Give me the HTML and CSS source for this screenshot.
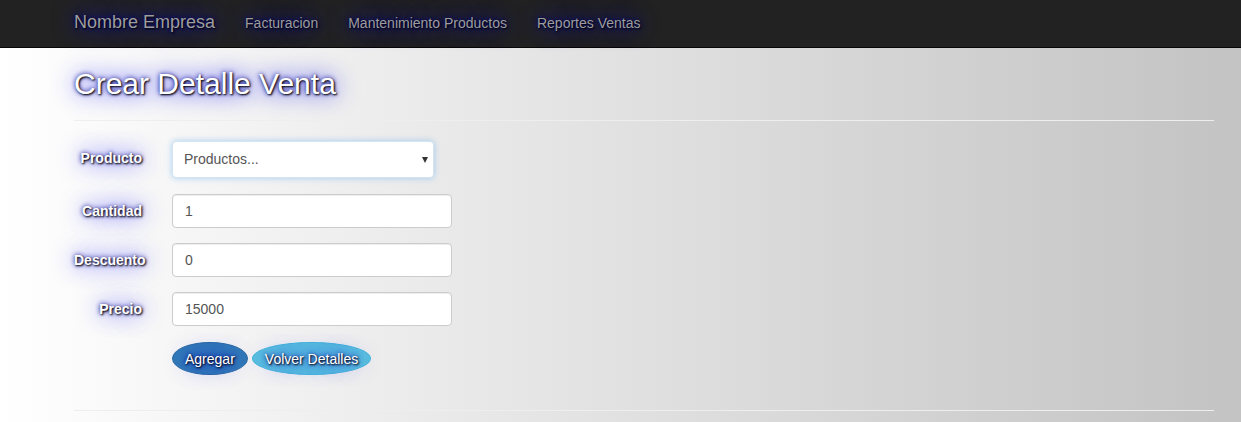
FILE: index.html
```html
<!DOCTYPE html>
<html lang="es">
<head>
<meta charset="utf-8">
<title>Crear Detalle Venta</title>
<link rel="stylesheet" href="styles.css">
</head>
<body>
<nav class="navbar">
  <div class="container nav-inner">
    <a class="brand glow" href="#">Nombre Empresa</a>
    <ul class="nav">
      <li><a class="glow" href="#">Facturacion</a></li>
      <li><a class="glow" href="#">Mantenimiento Productos</a></li>
      <li><a class="glow" href="#">Reportes Ventas</a></li>
    </ul>
  </div>
</nav>
<main class="container">
  <h2 class="title glow">Crear Detalle Venta</h2>
  <hr class="rule">
  <form class="form">
    <div class="form-group form-group-select">
      <label class="control-label glow">Producto</label>
      <div class="select-wrap">
        <select class="form-select"><option>Productos...</option></select>
      </div>
    </div>
    <div class="form-group">
      <label class="control-label glow">Cantidad</label>
      <input class="form-input" type="text" value="1">
    </div>
    <div class="form-group">
      <label class="control-label glow">Descuento</label>
      <input class="form-input" type="text" value="0">
    </div>
    <div class="form-group">
      <label class="control-label glow">Precio</label>
      <input class="form-input" type="text" value="15000">
    </div>
    <div class="form-group form-group-actions">
      <span class="control-label"></span>
      <div class="actions">
        <button type="button" class="btn btn-primary glow">Agregar</button>
        <button type="button" class="btn btn-info glow">Volver Detalles</button>
      </div>
    </div>
  </form>
  <hr class="rule">
</main>
</body>
</html>
```
FILE: styles.css
```css
html {
  background: linear-gradient(to right, #ffffff 0%, #c3c3c3 100%);
  min-height: 100%;
}
body {
  margin: 0;
  font-family: "Liberation Sans", Arial, Helvetica, sans-serif;
  font-size: 14px;
  line-height: 1.42857;
  color: #333;
  min-height: 422px;
}
.container {
  width: 1140px;
  margin-left: 59px;
  padding: 0 15px;
}
.glow {
  text-shadow: 1px 1px 2px black, 0 0 25px blue, 0 0 5px darkblue;
}
.navbar {
  background: #222222;
  border-bottom: 1px solid #080808;
  height: 47px;
}
.nav-inner {
  display: flex;
  align-items: flex-start;
}
.brand {
  color: #9d9d9d;
  font-size: 18px;
  line-height: 20px;
  padding: 12px 15px 15px 0;
  text-decoration: none;
}
.nav {
  display: flex;
  list-style: none;
  margin: 0;
  padding: 0;
}
.nav a {
  display: block;
  color: #9d9d9d;
  text-decoration: none;
  font-size: 14px;
  line-height: 20px;
  padding: 13px 15px 14px;
}
.title {
  color: #fff;
  font-size: 30px;
  font-weight: 500;
  line-height: 1.1;
  margin: 19px 0 10px;
}
.rule {
  border: 0;
  border-top: 1px solid #eeeeee;
  margin: 20px 0;
  height: 0;
}
.form {
  display: flex;
  flex-direction: column;
}
.form-group {
  display: flex;
  align-items: flex-start;
  gap: 30px;
  margin-bottom: 15px;
}
.form-group-select {
  margin-bottom: 16px;
}
.form-group-actions {
  padding-top: 1px;
}
.control-label {
  width: 68px;
  flex: none;
  text-align: right;
  white-space: nowrap;
  font-weight: bold;
  color: #fff;
  padding-top: 7px;
  line-height: 20px;
}
.form-input {
  box-sizing: border-box;
  width: 280px;
  height: 34px;
  padding: 6px 12px;
  font: inherit;
  font-size: 14px;
  color: #555;
  background: #fff;
  border: 1px solid #ccc;
  border-radius: 4px;
  box-shadow: inset 0 1px 1px rgba(0, 0, 0, 0.075);
  margin: 0;
}
.select-wrap {
  position: relative;
  width: 262px;
}
.select-wrap::after {
  content: "";
  position: absolute;
  right: 6px;
  top: 16px;
  border-left: 3.5px solid transparent;
  border-right: 3.5px solid transparent;
  border-top: 6px solid #333;
}
.form-select {
  appearance: none;
  -webkit-appearance: none;
  box-sizing: border-box;
  width: 262px;
  height: 37px;
  padding: 6px 11px;
  font: inherit;
  font-size: 14px;
  color: #555;
  background: #fff;
  border: 1px solid #d4e4f2;
  border-radius: 4px;
  box-shadow: 0 0 6px rgba(102, 175, 233, 0.55);
  margin: 0;
}
.actions {
  display: flex;
  gap: 4px;
}
.btn {
  font: inherit;
  font-size: 14px;
  line-height: 20px;
  height: 33px;
  padding: 6px 12px;
  color: #fff;
  border: 1px solid transparent;
  border-radius: 50%;
  margin: 0;
  cursor: pointer;
}
.btn-primary {
  background: #337ab7;
  border-color: #2e6da4;
}
.btn-info {
  background: #5bc0de;
  border-color: #46b8da;
}
```
